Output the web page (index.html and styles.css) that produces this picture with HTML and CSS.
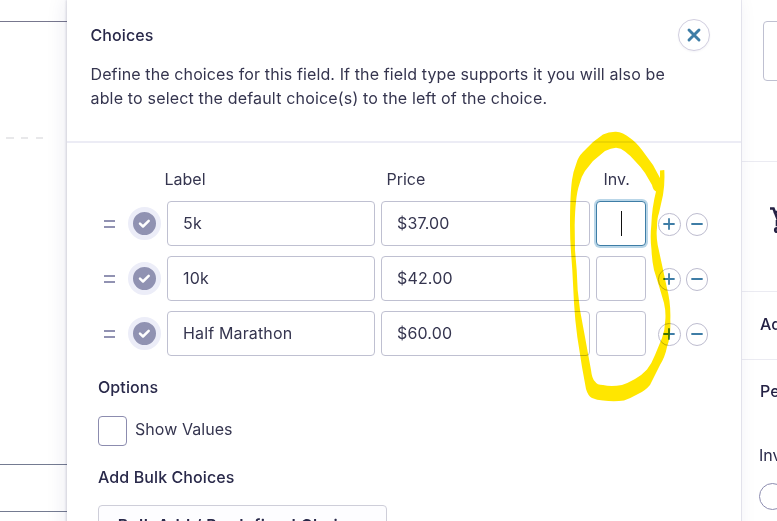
FILE: index.html
```html
<!DOCTYPE html>
<html lang="en">
<head>
<meta charset="utf-8">
<title>Choices</title>
<link rel="stylesheet" href="styles.css">
</head>
<body>
<div class="app">
  <aside class="canvas">
    <div class="canvas-top"></div>
    <div class="canvas-body"><svg class="dashes" width="44" height="2"><path d="M6 1h8M21 1h7M36 1h7"/></svg></div>
    <div class="canvas-field"></div>
  </aside>
  <main class="flyout">
    <header class="head">
      <div class="head-row">
        <h2>Choices</h2>
        <button class="close" aria-label="Close"><svg width="16" height="16" viewBox="0 0 16 16"><path d="M3 3l10 10M13 3L3 13"/></svg></button>
      </div>
      <p>Define the choices for this field. If the field type supports it you will also be<br><span class="wide">able to select the default choice(s) to the left of the choice.</span></p>
    </header>
    <section class="choices">
      <div class="row labels"><span class="label">Label</span><span class="price">Price</span><span class="inv">Inv.</span></div>
      <div class="row">
        <i class="handle"></i><span class="check"><svg viewBox="0 0 23 23"><path d="M7 11.7l3 2.8 5.7-5.7"/></svg></span>
        <div class="input label">5k</div><div class="input price">$37.00</div><div class="input inv focus"><i class="caret"></i></div>
        <button class="round"><svg viewBox="0 0 12 12"><path d="M1 6h10M6 1v10"/></svg></button><button class="round"><svg viewBox="0 0 12 12"><path d="M1 6h10"/></svg></button>
      </div>
      <div class="row">
        <i class="handle"></i><span class="check"><svg viewBox="0 0 23 23"><path d="M7 11.7l3 2.8 5.7-5.7"/></svg></span>
        <div class="input label">10k</div><div class="input price">$42.00</div><div class="input inv"></div>
        <button class="round"><svg viewBox="0 0 12 12"><path d="M1 6h10M6 1v10"/></svg></button><button class="round"><svg viewBox="0 0 12 12"><path d="M1 6h10"/></svg></button>
      </div>
      <div class="row">
        <i class="handle"></i><span class="check"><svg viewBox="0 0 23 23"><path d="M7 11.7l3 2.8 5.7-5.7"/></svg></span>
        <div class="input label">Half Marathon</div><div class="input price">$60.00</div><div class="input inv"></div>
        <button class="round"><svg viewBox="0 0 12 12"><path d="M1 6h10M6 1v10"/></svg></button><button class="round"><svg viewBox="0 0 12 12"><path d="M1 6h10"/></svg></button>
      </div>
    </section>
    <section class="options">
      <h3>Options</h3>
      <div class="option"><span class="box"></span><span>Show Values</span></div>
      <h3>Add Bulk Choices</h3>
      <button class="bulk">Bulk Add / Predefined Choices</button>
    </section>
  </main>
  <aside class="sidebar">
    <div class="side-search"><div class="search"></div></div>
    <div class="side-icon"><svg width="20" height="30" viewBox="0 0 20 30"><path d="M0 2.5h3.500l5 13H20M3.500 6h16M6.500 10.500h14M7 14v5h13"/><circle cx="7" cy="24" r="1.800"/></svg></div>
    <div class="side-title first">Advanced</div>
    <div class="side-title second">Permissions</div>
    <div class="side-label">Inventory</div>
    <div class="radio"></div>
  </aside>
</div>
<svg class="marker" width="777" height="521" viewBox="0 0 777 521"><path fill-rule="evenodd" d="M616 131.700Q609 131.500 603 134.500L593 142L583 152Q578 157 576.500 163Q573 172 572 180Q570 195 570 225Q570 240 571 252L572.300 270L574 303Q575 320 577.300 337L582 367L586 389Q588 396 592 398Q597 400 603 400.500Q614 402 624 400.500Q631 398 638 394Q645 391 650 385L660 365Q665 357 667 347Q671 336 670.300 320Q671 303 666.700 287L662.700 268L657.700 245Q656 235 657 228Q657 218 659 213L663 195Q665 184 664.300 170L660 170.500L660 178L653 165L642 150Q636 142 630 138Q623 132 616 131.700ZM616 147.700Q621 148 625 151.500Q631 156 635 161Q641 167 645 173L652 185Q653 190 656 191.500Q652 207 651.300 225Q650 238 651.500 250Q652 261 654 270L659.300 287L664 303Q666 312 665.300 320Q665 330 662 338L655 355Q652 363 647 369.500Q642 375 635 379Q628 383 622 385Q611 387 603 385Q597 385 595 381.500Q592 379 591 370L585 337L580 310Q577 290 576.700 270L575 250L574.700 225Q575 210 576 202Q577 191 579.500 184Q581 177 585 171L593 161L605 151Q611 148 616 147.700Z"/></svg>
</body>
</html>
```

FILE: styles.css
```css
* { box-sizing: border-box; }
body { margin: 0; background: #fff; color: #35354f; font: 16px/24px Inter, sans-serif; overflow: hidden; }
h2, h3, p { margin: 0; font-size: 16px; line-height: 24px; }
h2, h3 { font-weight: 500; color: #29294a; }
button { font: inherit; padding: 0; margin: 0; background: #fff; }
svg { display: block; fill: none; }
.app { display: grid; grid-template-columns: 67px 674px 36px; height: 521px; overflow: hidden; }
.canvas { display: flex; flex-direction: column; }
.canvas-top { height: 22px; border-bottom: 1px solid #77778e; }
.canvas-body { height: 443px; padding-top: 115px; border-bottom: 1px solid #747b91; }
.canvas-field { height: 47px; border-bottom: 1px solid #747b91; }
.dashes { stroke: #d2d2d5; stroke-width: 1.2; }
.flyout { position: relative; background: #fff; box-shadow: -1px 0 2px rgba(40,40,90,.16), -3px 0 18px rgba(40,40,100,.08); min-width: 0; }
.head { height: 143px; border-bottom: 2px solid #ececf5; padding: 19px 31px 0 23.5px; }
.head-row { display: flex; justify-content: space-between; height: 43px; }
.head h2 { padding-top: 4px; letter-spacing: .1px; }
.head p { letter-spacing: .12px; white-space: nowrap; }
.wide { letter-spacing: .17px; }
.close { width: 32px; height: 32px; border: 1px solid #d2cfe0; border-radius: 50%; display: grid; place-items: center; box-shadow: 0 1px 2px rgba(40,40,90,.05); }
.close svg { stroke: #3e7da6; stroke-width: 2.9; stroke-linecap: round; }
.choices { padding: 20px 0 0 37px; height: 223px; }
.row { display: flex; align-items: center; height: 45px; margin-bottom: 10px; }
.labels { height: 32px; margin-bottom: 6px; padding-left: 60.5px; gap: 14px; }
.labels .price { width: 203px; }
.handle { width: 11px; height: 8px; border: solid #9192b2; border-width: 2px 0; margin-right: 13px; }
.check { width: 33px; height: 33px; border: 5px solid #ecedf8; background: #9092b2; border-radius: 50%; margin-right: 6px; }
.check svg { stroke: #fff; stroke-width: 2.5; stroke-linecap: round; stroke-linejoin: round; }
.input { height: 45px; border: 1px solid #bfc0d1; border-radius: 4px; padding: 0 15px; line-height: 43px; background: #fff; letter-spacing: .15px; }
.label { width: 208px; }
.input.label, .input.price { margin-right: 6px; }
.price { width: 209px; }
.inv { width: 50px; }
.focus { border-color: #3e7da6; box-shadow: 0 0 0 2px #b9d6e8; display: grid; place-items: center; }
.caret { width: 1px; height: 25px; background: #111; }
.round { width: 22.5px; height: 22.5px; border: 1px solid #bdbccf; border-radius: 50%; display: grid; place-items: center; margin: 1.5px 0 0 5.2px; }
.inv + .round { margin-left: 12px; }
.round svg { width: 12px; height: 12px; stroke: #3e7da6; stroke-width: 1.8; stroke-linecap: round; }
.options { padding: 9px 0 0 31px; }
.options h3 { letter-spacing: .1px; }
.option { display: flex; gap: 8px; height: 66px; padding-top: 17px; }
.option span + span { padding-top: 1px; letter-spacing: .06px; }
.box { width: 29px; height: 30px; border: 1px solid #8c8caf; border-radius: 4px; }
.bulk { display: block; width: 289px; height: 40px; margin-top: 16px; border: 1px solid #ceced9; border-radius: 4px; background: #fdfdff; color: #29294a; font-weight: 600; letter-spacing: .5px; }
.sidebar { border-left: 1px solid #ebebf2; overflow: hidden; background: #fff; color: #29294a; }
.side-search { height: 162px; padding: 21px 0 0 21px; border-bottom: 1px solid #ebebf2; }
.search { width: 70px; height: 60px; border: 1px solid #bfc0d1; border-radius: 4px; }
.side-icon { height: 130px; padding: 44px 0 0 28px; border-bottom: 1px solid #ebebf2; }
.side-icon svg { stroke: #242144; stroke-width: 2.6; }
.side-title { font-weight: 500; padding-left: 18px; color: #242144; }
.first { height: 68px; padding-top: 20px; border-bottom: 1px solid #ebebf2; }
.second { padding-top: 19px; height: 83px; }
.side-label { padding-left: 17px; height: 40px; }
.radio { width: 27px; height: 27px; border: 1px solid #8c8caf; border-radius: 50%; margin-left: 17px; }
.marker { position: absolute; left: 0; top: 0; pointer-events: none; mix-blend-mode: multiply; fill: #ffe600; }
```
